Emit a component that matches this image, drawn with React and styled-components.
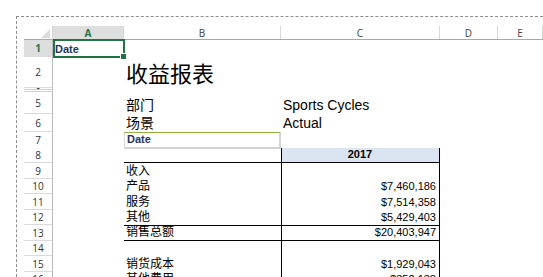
import React from 'react';
import styled, { createGlobalStyle } from 'styled-components';

const GlobalStyle = createGlobalStyle`
  html, body {
    margin: 0;
    padding: 0;
    background: #fff;
    overflow: hidden;
  }
  body {
    font-family: "Liberation Sans", "Noto Sans CJK SC", sans-serif;
  }
`;

const COLS = '29px 71px 157px 159px 58px 1fr';
const BLACK = '1px solid #000';

const Page = styled.div`
  box-sizing: border-box;
  height: 277px;
  padding: 16px 0 0 16px;
`;

const Frame = styled.div`
  box-sizing: border-box;
  height: 100%;
  border-top: 1px dashed #8e8e8e;
  border-left: 1px dashed #8e8e8e;
  padding: 9px 0 0 7px;
`;

const Sheet = styled.div`
  position: relative;
`;

const HeaderRow = styled.div`
  display: grid;
  grid-template-columns: ${COLS};
  height: 14px;
  box-sizing: border-box;
  border-bottom: 1px solid #a8a8a8;
`;

const Corner = styled.div`
  position: relative;
  border-right: 1px solid #d6d6d6;
  &::after {
    content: '';
    position: absolute;
    right: 2px;
    bottom: 1px;
    border-style: solid;
    border-width: 0 0 9px 9px;
    border-color: transparent transparent #dcdcdc transparent;
  }
`;

const ColHead = styled.div`
  display: flex;
  align-items: center;
  justify-content: center;
  border-right: 1px solid #d6d6d6;
  font-family: "Open Sans", "Liberation Sans", sans-serif;
  font-size: 10px;
  line-height: 1;
  color: ${p => (p.$active ? '#217346' : '#444')};
  font-weight: ${p => (p.$active ? 700 : 400)};
  background: ${p => (p.$active ? '#dedede' : '#fff')};
`;

const Row = styled.div`
  display: grid;
  grid-template-columns: ${COLS};
  height: ${p => p.$h}px;
`;

const RowHead = styled.div`
  box-sizing: border-box;
  display: flex;
  align-items: center;
  justify-content: center;
  overflow: hidden;
  border-right: 1px solid #b9b9b9;
  border-bottom: ${p => (p.$double ? '3px double #cfcfcf' : '1px solid #dadada')};
  font-family: "Open Sans", "Liberation Sans", sans-serif;
  font-size: 10px;
  line-height: 1;
  color: ${p => (p.$active ? '#217346' : '#333')};
  font-weight: ${p => (p.$active ? 700 : 400)};
  background: ${p => (p.$active ? '#dedede' : '#fff')};
`;

const Cell = styled.div`
  box-sizing: border-box;
  display: flex;
  align-items: flex-end;
  justify-content: ${p =>
    p.$align === 'right' ? 'flex-end' : p.$align === 'center' ? 'center' : 'flex-start'};
  padding: 0 3px 1px 2px;
  white-space: nowrap;
  font-size: ${p => p.$size || 12}px;
  font-weight: ${p => (p.$bold ? 700 : 400)};
  color: ${p => p.$color || '#000'};
  line-height: 1.15;
  background: ${p => p.$bg || 'transparent'};
  border-top: ${p => p.$top || 'none'};
  border-bottom: ${p => p.$bottom || 'none'};
  border-left: ${p => p.$left || 'none'};
  border-right: ${p => p.$right || 'none'};
`;

// statement line labels sit a touch lower than the default cell text
const Label = styled(Cell)`
  line-height: 1.05;
`;

const Selection = styled.div`
  position: absolute;
  top: 13px;
  left: 29px;
  width: 72px;
  height: 19px;
  box-sizing: border-box;
  border: 2px solid #217346;
  pointer-events: none;
  &::after {
    content: '';
    position: absolute;
    right: -4px;
    bottom: -4px;
    width: 5px;
    height: 5px;
    background: #217346;
    border: 1px solid #fff;
  }
`;

const NAVY = '#1f3564';

const side = { $left: BLACK, $right: BLACK };

// [row number, B cell, C cell]
const body = [
  [9, { text: '收入' }, side],
  [10, { text: '产品' }, { ...side, text: '$7,460,186' }],
  [11, { text: '服务' }, { ...side, text: '$7,514,358' }],
  [12, { text: '其他' }, { ...side, text: '$5,429,403' }],
  [13, { text: '销售总额', $top: BLACK, $bottom: BLACK },
    { ...side, text: '$20,403,947', $top: BLACK, $bottom: BLACK }],
  [14, {}, side],
  [15, { text: '销货成本' }, { ...side, text: '$1,929,043' }],
  [16, { text: '其他费用' }, { ...side, text: '$352,138' }],
];

// rows render at 15.5px on average, so they alternate 16 / 15
const rowHeight = n => (n % 2 ? 16 : 15);

function BodyRow({ n, b, c }) {
  const { text: bText, ...bStyle } = b;
  const { text: cText, ...cStyle } = c;
  return (
    <Row $h={rowHeight(n)}>
      <RowHead>{n}</RowHead>
      <Cell />
      <Label {...bStyle}>{bText}</Label>
      <Cell $align="right" $size={11} {...cStyle}>{cText}</Cell>
      <Cell />
      <Cell />
    </Row>
  );
}

export default function App() {
  return (
    <>
      <GlobalStyle />
      <Page>
        <Frame>
          <Sheet>
            <HeaderRow>
              <Corner />
              <ColHead $active>A</ColHead>
              <ColHead>B</ColHead>
              <ColHead>C</ColHead>
              <ColHead>D</ColHead>
              <ColHead>E</ColHead>
            </HeaderRow>

            <Row $h={17}>
              <RowHead $active>1</RowHead>
              <Cell $size={11} $bold $color={NAVY}>Date</Cell>
              <Cell />
              <Cell />
              <Cell />
              <Cell />
            </Row>

            <Row $h={31}>
              <RowHead>2</RowHead>
              <Cell />
              <Cell $size={22}>收益报表</Cell>
              <Cell />
              <Cell />
              <Cell />
            </Row>

            <Row $h={4}>
              <RowHead $double>3</RowHead>
              <Cell />
              <Cell />
              <Cell />
              <Cell />
              <Cell />
            </Row>

            <Row $h={22}>
              <RowHead>5</RowHead>
              <Cell />
              <Cell $size={14}>部门</Cell>
              <Cell $size={14}>Sports Cycles</Cell>
              <Cell />
              <Cell />
            </Row>

            <Row $h={18}>
              <RowHead>6</RowHead>
              <Cell />
              <Cell $size={14}>场景</Cell>
              <Cell $size={14}>Actual</Cell>
              <Cell />
              <Cell />
            </Row>

            <Row $h={rowHeight(7)}>
              <RowHead>7</RowHead>
              <Cell />
              <Cell
                $size={11}
                $bold
                $color={NAVY}
                $top="1px solid #8db33c"
                $left="1px solid #dadada"
                $right="2px solid #d3d3d3"
                $bottom="2px solid #d3d3d3"
              >
                Date
              </Cell>
              <Cell />
              <Cell />
              <Cell />
            </Row>

            <Row $h={rowHeight(8)}>
              <RowHead>8</RowHead>
              <Cell />
              <Cell $bottom={BLACK} />
              <Cell $size={11} $bold $align="center" $bg="#dae5f1" {...side} $bottom={BLACK}>
                2017
              </Cell>
              <Cell />
              <Cell />
            </Row>

            {body.map(([n, b, c]) => (
              <BodyRow key={n} n={n} b={b} c={c} />
            ))}

            <Selection />
          </Sheet>
        </Frame>
      </Page>
    </>
  );
}
